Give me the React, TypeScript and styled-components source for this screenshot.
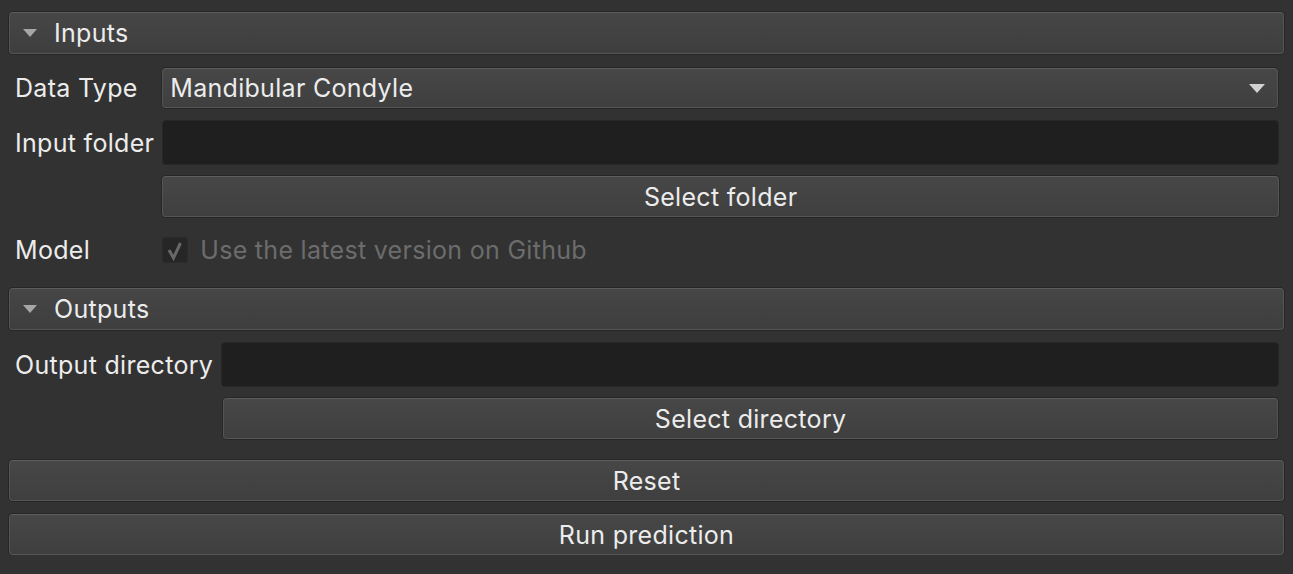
import React, { useState } from "react";
import styled, { createGlobalStyle } from "styled-components";

const GlobalStyle = createGlobalStyle`
  html, body {
    margin: 0;
    padding: 0;
    background: #323232;
  }
  body {
    font-family: Inter, "Noto Sans", "Liberation Sans", sans-serif;
    font-size: 25px;
    letter-spacing: 0.3px;
    color: #ececec;
  }
`;

const Page = styled.div`
  display: flex;
  flex-direction: column;
  padding: 12px 9px 0 9px;
`;

const SectionHeader = styled.button`
  display: flex;
  align-items: center;
  gap: 17px;
  height: 42px;
  padding: 0 0 0 13px;
  margin: 0;
  box-sizing: border-box;
  width: 100%;
  background: linear-gradient(#464646, #3e3e3e);
  border: 1px solid #555555;
  border-top-color: #5c5c5c;
  border-radius: 4px;
  box-shadow: 0 0 0 1px #262626;
  color: #ececec;
  font-family: inherit;
  font-size: inherit;
  letter-spacing: inherit;
  text-align: left;
  cursor: pointer;
`;

const Triangle = styled.span<{ open: boolean }>`
  width: 0;
  height: 0;
  border-left: 7px solid transparent;
  border-right: 7px solid transparent;
  border-top: 8px solid #a6a6a6;
  transform: ${({ open }) => (open ? "none" : "rotate(-90deg)")};
`;

const Form = styled.div<{ top: number; bottom: number }>`
  display: grid;
  grid-template-columns: auto 1fr;
  column-gap: 8px;
  align-items: center;
  padding: ${({ top, bottom }) => `${top}px 5px ${bottom}px 6px`};
`;

const Label = styled.label<{ gap?: number }>`
  margin-top: ${({ gap }) => (gap ? `${gap}px` : "0")};
  color: #ececec;
  white-space: nowrap;
`;

const Field = styled.div<{ gap?: number }>`
  margin-top: ${({ gap }) => (gap ? `${gap}px` : "0")};
`;

const Combo = styled.div`
  display: flex;
  align-items: center;
  justify-content: space-between;
  height: 40px;
  box-sizing: border-box;
  margin-right: 1px;
  padding: 0 12px 0 7px;
  background: linear-gradient(#474747, #3f3f3f);
  border: 1px solid #555555;
  border-top-color: #5c5c5c;
  border-radius: 4px;
  box-shadow: 0 0 0 1px #262626;
`;

const ComboArrow = styled.span`
  width: 0;
  height: 0;
  border-left: 8px solid transparent;
  border-right: 8px solid transparent;
  border-top: 9px solid #d2d2d2;
`;

const LineEdit = styled.input`
  display: block;
  width: 100%;
  height: 45px;
  box-sizing: border-box;
  margin: 0;
  padding: 0 9px;
  background: #1f1f1f;
  border: 1px solid #272727;
  border-radius: 4px;
  color: #ececec;
  font-family: inherit;
  font-size: inherit;
  outline: none;
`;

const PushButton = styled.button<{ inset?: number }>`
  display: block;
  width: ${({ inset }) => (inset ? `calc(100% - ${inset + 1}px)` : "100%")};
  margin-left: ${({ inset }) => (inset ? `${inset}px` : "0")};
  height: 41px;
  box-sizing: border-box;
  padding: 0;
  background: linear-gradient(#474747, #3f3f3f);
  border: 1px solid #555555;
  border-top-color: #5e5e5e;
  border-radius: 4px;
  box-shadow: 0 0 0 1px #262626;
  color: #ececec;
  font-family: inherit;
  font-size: inherit;
  letter-spacing: inherit;
  cursor: pointer;
`;

const CheckRow = styled.div`
  display: flex;
  align-items: center;
  gap: 12px;
  height: 42px;
  color: #6c6c6c;
`;

const CheckBox = styled.span`
  display: flex;
  align-items: center;
  justify-content: center;
  width: 26px;
  height: 26px;
  box-sizing: border-box;
  background: #262626;
  border: 1px solid #2b2b2b;
  border-radius: 3px;
`;

const Actions = styled.div`
  display: flex;
  flex-direction: column;
  gap: 13px;
  margin-top: 21px;
`;

const App: React.FC = () => {
  const [inputsOpen, setInputsOpen] = useState(true);
  const [outputsOpen, setOutputsOpen] = useState(true);

  return (
    <>
      <GlobalStyle />
      <Page>
        <SectionHeader onClick={() => setInputsOpen(!inputsOpen)}>
          <Triangle open={inputsOpen} />
          Inputs
        </SectionHeader>
        {inputsOpen && (
          <Form top={14} bottom={17}>
            <Label>Data Type</Label>
            <Combo>
              Mandibular Condyle
              <ComboArrow />
            </Combo>

            <Label gap={12}>Input folder</Label>
            <Field gap={12}>
              <LineEdit type="text" />
            </Field>

            <span />
            <Field gap={11}>
              <PushButton>Select folder</PushButton>
            </Field>

            <Label gap={12}>Model</Label>
            <Field gap={12}>
              <CheckRow>
                <CheckBox>
                  <svg width="22" height="22" viewBox="0 0 22 22">
                    <path
                      d="M5 11 L9.5 19 L16.5 4"
                      fill="none"
                      stroke="#686868"
                      strokeWidth="3"
                      strokeLinejoin="miter"
                    />
                  </svg>
                </CheckBox>
                Use the latest version on Github
              </CheckRow>
            </Field>
          </Form>
        )}

        <SectionHeader onClick={() => setOutputsOpen(!outputsOpen)}>
          <Triangle open={outputsOpen} />
          Outputs
        </SectionHeader>
        {outputsOpen && (
          <Form top={12} bottom={0}>
            <Label>Output directory</Label>
            <LineEdit type="text" />

            <span />
            <Field gap={11}>
              <PushButton inset={2}>Select directory</PushButton>
            </Field>
          </Form>
        )}

        <Actions>
          <PushButton>Reset</PushButton>
          <PushButton>Run prediction</PushButton>
        </Actions>
      </Page>
    </>
  );
};

export default App;
